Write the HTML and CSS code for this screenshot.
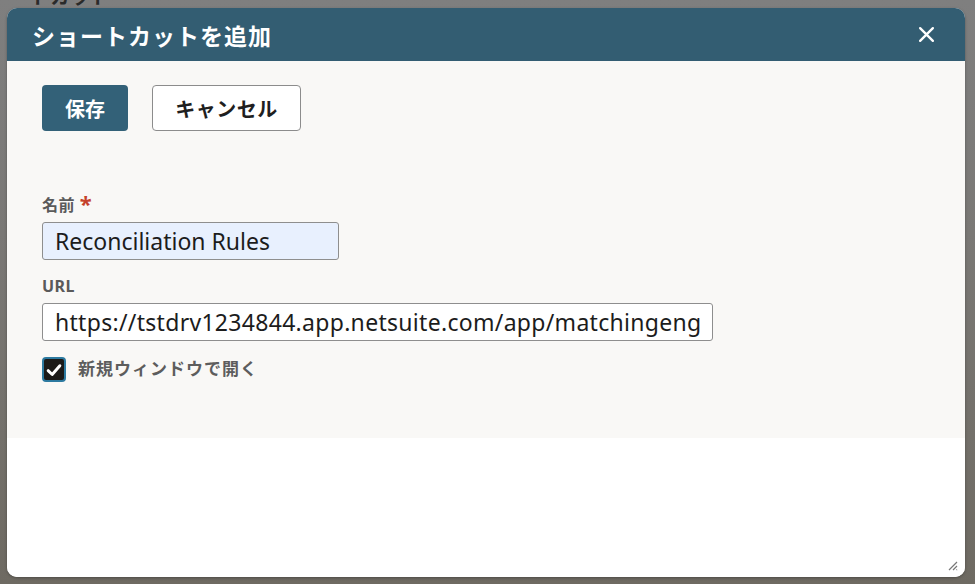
FILE: index.html
```html
<!DOCTYPE html>
<html lang="ja">
<head>
  <meta charset="UTF-8" />
  <title>ショートカットを追加</title>
  <link rel="stylesheet" href="styles.css">
</head>
<body>
  <div class="backdrop">
    <div class="behind-text">ートカット</div>

    <div class="dialog">
      <header class="dialog-head">
        <h1>ショートカットを追加</h1>
        <span class="close">
          <svg width="17" height="17" viewBox="0 0 16 16"><path d="M2 2 L14 14 M14 2 L2 14" stroke="#fff" stroke-width="2.2" stroke-linecap="round"/></svg>
        </span>
      </header>

      <section class="dialog-body">
        <div class="actions">
          <button class="btn btn-primary">保存</button>
          <button class="btn btn-secondary">キャンセル</button>
        </div>

        <div class="field">
          <label class="label">名前 <span class="req">*</span></label>
          <div class="input input-name">Reconciliation Rules</div>
        </div>

        <div class="field">
          <label class="label">URL</label>
          <div class="input input-url">https://tstdrv1234844.app.netsuite.com/app/matchingeng</div>
        </div>

        <div class="check-row">
          <span class="checkbox">
            <svg width="18" height="18" viewBox="0 0 16 16"><path d="M2.8 8.6 L6.4 12 L13.2 4.2" fill="none" stroke="#fff" stroke-width="2.6" stroke-linecap="round" stroke-linejoin="round"/></svg>
          </span>
          <span class="check-label">新規ウィンドウで開く</span>
        </div>
      </section>

      <div class="dialog-foot">
        <svg class="grip" width="12" height="12" viewBox="0 0 12 12"><path d="M11 3 L3 11 M11 7 L7 11 M11 10.5 L10.5 11" stroke="#777" stroke-width="1.2"/></svg>
      </div>
    </div>
  </div>
</body>
</html>
```

FILE: styles.css
```css
* {
  box-sizing: border-box;
}

body {
  margin: 0;
  font-family: "Noto Sans", "Noto Sans CJK JP", sans-serif;
}

.backdrop {
  position: relative;
  width: 975px;
  height: 584px;
  background: linear-gradient(to bottom, #7f7f7f 0%, #7a7875 40%, #6e6a62 100%);
  padding: 8px 10px 0 7px;
  overflow: hidden;
}

.behind-text {
  position: absolute;
  top: -13px;
  left: 10px;
  font-size: 20px;
  line-height: 20px;
  color: #2a2a2a;
  font-weight: 700;
}

.dialog {
  position: relative;
  width: 958px;
  height: 569px;
  background: #fff;
  border-radius: 10px;
  overflow: hidden;
  display: flex;
  flex-direction: column;
  box-shadow: 0 1px 3px rgba(0, 0, 0, 0.3);
}

.dialog-head {
  height: 53px;
  background: #335d72;
  display: flex;
  align-items: center;
  justify-content: space-between;
  padding: 0 30px 0 25px;
  flex-shrink: 0;
}

.dialog-head h1 {
  margin: 0;
  color: #fff;
  font-size: 23px;
  font-weight: 700;
  letter-spacing: 1px;
}

.close {
  display: flex;
}

.dialog-body {
  background: #f9f8f6;
  height: 377px;
  padding: 24px 35px 0 35px;
  flex-shrink: 0;
}

.actions {
  display: flex;
  gap: 24px;
  margin-bottom: 63px;
}

.btn {
  height: 46px;
  border-radius: 4px;
  font-family: inherit;
  font-size: 20px;
  font-weight: 700;
  padding: 0;
}

.btn-primary {
  width: 86px;
  background: #336178;
  color: #fff;
  border: none;
}

.btn-secondary {
  width: 149px;
  background: #fff;
  color: #1f1f1f;
  border: 1px solid #8c8c8c;
  letter-spacing: 0.5px;
}

.field {
  display: flex;
  flex-direction: column;
}

.label {
  font-size: 16px;
  font-weight: 700;
  color: #5a5a5a;
  height: 22px;
  line-height: 22px;
  margin-bottom: 6px;
  letter-spacing: 0.5px;
}

.req {
  color: #c5412b;
  font-size: 22px;
  vertical-align: top;
  line-height: 18px;
}

.input {
  height: 38px;
  border: 1px solid #8e8e8e;
  border-radius: 3px;
  padding: 0 12px;
  font-size: 23px;
  line-height: 36px;
  color: #1c1c1c;
  white-space: nowrap;
  overflow: hidden;
}

.input-name {
  width: 297px;
  background: #e8f0fe;
  margin-bottom: 15px;
}

.input-url {
  width: 671px;
  background: #fff;
  letter-spacing: 0.3px;
}

.check-row {
  display: flex;
  align-items: center;
  gap: 12px;
  margin-top: 16px;
}

.checkbox {
  width: 24px;
  height: 25px;
  background: #1c1a18;
  border: 2px solid #2d7aa0;
  border-radius: 4px;
  display: flex;
  align-items: center;
  justify-content: center;
}

.check-label {
  font-size: 17px;
  font-weight: 700;
  color: #5d5d5d;
  margin-top: -4px;
  letter-spacing: 1px;
}

.dialog-foot {
  flex: 1;
  background: #fff;
  display: flex;
  align-items: flex-end;
  justify-content: flex-end;
  padding: 0 7px 6px 0;
}
```
